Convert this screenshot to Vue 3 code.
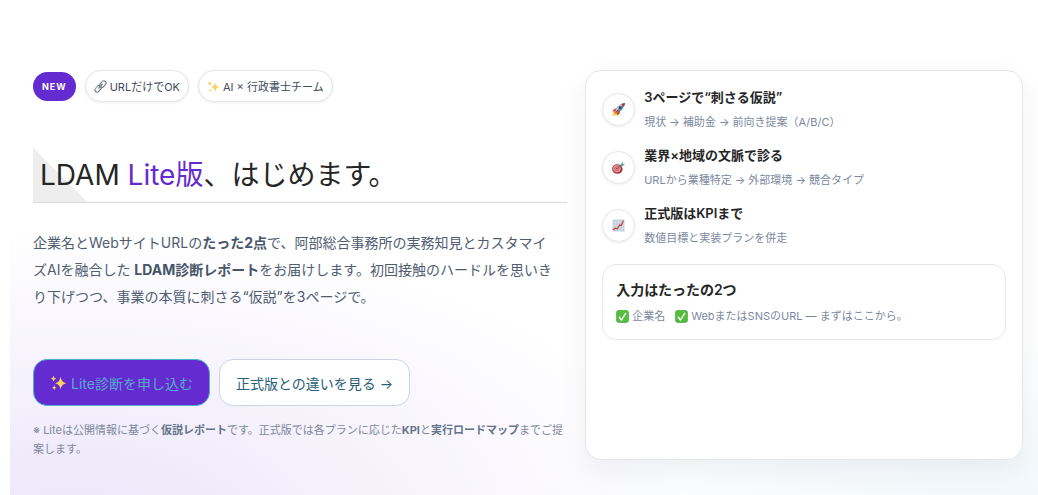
<script setup>
const points = [
  { icon: 'rocket', title: '3ページで“刺さる仮説”', text: '現状 → 補助金 → 前向き提案（A/B/C）' },
  { icon: 'target', title: '業界×地域の文脈で診る', text: 'URLから業種特定 → 外部環境 → 競合タイプ' },
  { icon: 'chart', title: '正式版はKPIまで', text: '数値目標と実装プランを併走' },
]
</script>

<template>
  <main class="hero">
    <section class="intro">
      <div class="badges">
        <span class="badge new">NEW</span>
        <span class="badge">
          <svg class="emoji-sm" viewBox="0 0 24 24" aria-hidden="true">
            <g fill="none" stroke-linecap="round">
              <rect x="10" y="3.500" width="13" height="8" rx="4" transform="rotate(-48 16.500 7.500)" stroke="#6a757c" stroke-width="2" />
              <rect x="1" y="12.500" width="13" height="8" rx="4" transform="rotate(-48 7.500 16.500)" stroke="#6a757c" stroke-width="2" />
              <path d="M9 15l6-7" stroke="#4a545a" stroke-width="2.400" />
              <path d="M9.500 14.200l4.800-5.600M14.500 4l3-1.500M3.500 15.500l3-3.500" stroke="#d5dbde" stroke-width="1" />
            </g>
          </svg>
          URLだけでOK
        </span>
        <span class="badge">
          <svg class="emoji-sm" viewBox="0 0 24 24" aria-hidden="true">
            <path fill="#fbcf62" d="M15 4Q16 12 23 13Q16 14 15 22Q14 14 7 13Q14 12 15 4ZM5 2Q5.500 6 9 6.500Q5.500 7 5 11Q4.500 7 1 6.500Q4.500 6 5 2ZM6 16Q6.500 19 9 19.500Q6.500 20 6 23Q5.500 20 3 19.500Q5.500 19 6 16Z" />
          </svg>
          AI × 行政書士チーム
        </span>
      </div>

      <h1>LDAM <span>Lite版</span>、はじめます。</h1>

      <p class="lead">
        企業名とWebサイトURLの<strong>たった2点</strong>で、阿部総合事務所の実務知見とカスタマイズAIを融合した <strong>LDAM診断レポート</strong>をお届けします。初回接触のハードルを思いきり下げつつ、事業の本質に刺さる“仮説”を3ページで。
      </p>

      <div class="actions">
        <a class="btn primary" href="#apply">
          <svg class="emoji" viewBox="0 0 24 24" aria-hidden="true">
            <path fill="#ffd45c" d="M15 4Q16 12 23 13Q16 14 15 22Q14 14 7 13Q14 12 15 4ZM5 2Q5.500 6 9 6.500Q5.500 7 5 11Q4.500 7 1 6.500Q4.500 6 5 2ZM6 16Q6.500 19 9 19.500Q6.500 20 6 23Q5.500 20 3 19.500Q5.500 19 6 16Z" />
          </svg>
          Lite診断を申し込む
        </a>
        <a class="btn" href="#compare">正式版との違いを見る →</a>
      </div>

      <p class="note">
        ※ Liteは公開情報に基づく<strong>仮説レポート</strong>です。正式版では各プランに応じた<strong>KPI</strong>と<strong>実行ロードマップ</strong>までご提案します。
      </p>
    </section>

    <aside class="card">
      <ul class="points">
        <li v-for="p in points" :key="p.icon">
          <span class="disc">
            <svg v-if="p.icon === 'rocket'" class="emoji-sm" viewBox="0 0 24 24" aria-hidden="true">
              <path fill="#f9c333" d="M7 14L1 18 3 19 0 24 6 22 7 24 11 18Z" />
              <path fill="#d83b32" d="M10 9L4 11 1 16 7 15ZM15 14L14 20 9 23 9 17Z" />
              <path fill="#63819b" d="M6 15Q9 5 18 2L22 6Q19 15 9 18Z" />
              <path fill="#b9cbd8" d="M6 15Q9 6 18 2L19 4Q13 8 8 16Z" />
              <path fill="#b92e36" d="M17 2Q20 0 24 0Q24 4 22 7Z" />
              <circle cx="15" cy="8.500" r="2.500" fill="#263f68" />
              <path d="M6 18l5-5" stroke="#c73432" stroke-width="2" />
            </svg>
            <svg v-else-if="p.icon === 'target'" class="emoji-sm" viewBox="0 0 24 24" aria-hidden="true">
              <ellipse cx="10" cy="15" rx="9.500" ry="8.500" fill="#a82f35" />
              <ellipse cx="9" cy="14" rx="8.500" ry="8" fill="#c4484c" />
              <ellipse cx="9" cy="14" rx="6" ry="5.500" fill="none" stroke="#f0cfcb" stroke-width="1.500" />
              <circle cx="9" cy="14" r="2.800" fill="none" stroke="#f0cfcb" stroke-width="1.200" />
              <path d="M9 14L19 6" stroke="#405b68" stroke-width="1.500" />
              <path fill="#5fa9b5" d="M16 6L20 1 20 5 24 6 20 9 16 9Z" />
            </svg>
            <svg v-else class="emoji-sm" viewBox="0 0 24 24" aria-hidden="true">
              <rect x="1" y="1" width="22" height="22" fill="#c3d0da" />
              <path d="M6 1v22M12 1v22M18 1v22M1 6h22M1 12h22M1 18h22" stroke="#d9e3ea" />
              <path d="M2 20L6 17 10 18 14 11 17 12 21 3" fill="none" stroke="#c43a3a" stroke-width="2.200" />
            </svg>
          </span>
          <div>
            <h2>{{ p.title }}</h2>
            <p>{{ p.text }}</p>
          </div>
        </li>
      </ul>

      <div class="inputs">
        <h2>入力はたったの2つ</h2>
        <p>
          <span v-for="label in ['企業名', 'WebまたはSNSのURL — まずはここから。']" :key="label" class="check">
            <svg class="tick" viewBox="0 0 24 24" aria-hidden="true">
              <rect x="0.500" y="0.500" width="23" height="23" rx="4" fill="#3da536" />
              <rect x="1.500" y="1" width="21" height="20.500" rx="3" fill="#55bd3c" />
              <path d="M5.500 12.500L10 18.500 18.500 5.500" fill="none" stroke="#fff" stroke-width="2.600" />
            </svg>
            {{ label }}
          </span>
        </p>
      </div>
    </aside>
  </main>
</template>

<style>
body {
  background: #fff;
}
</style>

<style scoped>
* {
  box-sizing: border-box;
}

.hero {
  display: grid;
  grid-template-columns: 1.22fr 1fr;
  gap: 18px;
  min-height: 100vh;
  margin-left: 10px;
  padding: 70px 15px 35px 23px;
  background:
    radial-gradient(620px 290px at 6% 105%, rgba(99, 44, 210, 0.12), transparent 100%),
    radial-gradient(520px 200px at 100% 108%, rgba(80, 160, 215, 0.09), transparent 100%),
    #fff;
  font-family: Inter, "Noto Sans CJK JP", sans-serif;
  color: #505d71;
}

h1,
h2,
p,
ul {
  margin: 0;
  padding: 0;
}

.badges {
  display: flex;
  align-items: center;
  gap: 9px;
}

.badge {
  display: inline-flex;
  align-items: center;
  gap: 3px;
  height: 32px;
  padding: 0 8px;
  border: 1px solid #e5e7eb;
  border-radius: 16px;
  background: #fff;
  box-shadow: 0 1px 3px rgba(15, 23, 42, 0.08);
  font-size: 11px;
  white-space: nowrap;
  color: #414b5a;
}

.badge.new {
  height: 29px;
  padding: 0 9px;
  border: 0;
  background: #642bd0;
  box-shadow: none;
  font-size: 9px;
  font-weight: 700;
  letter-spacing: 1px;
  color: #fff;
}

.emoji-sm {
  width: 13px;
  height: 13px;
}

.emoji {
  width: 17px;
  height: 17px;
}

h1 {
  margin-top: 46px;
  padding: 0 7px;
  border-bottom: 1px solid #d9d9db;
  background: linear-gradient(to top right, #eeeeef 50%, transparent 50%) 0 0 / 55px 54px no-repeat;
  font-size: 28px;
  font-weight: 400;
  line-height: 54px;
  color: #262626;
}

h1 span {
  color: #642bd0;
}

.lead {
  margin-top: 26px;
  padding-right: 8px;
  font-size: 14px;
  line-height: 27px;
}

.lead strong {
  color: #475569;
}

.actions {
  display: flex;
  gap: 9px;
  margin-top: 49px;
}

.btn {
  display: inline-flex;
  align-items: center;
  gap: 4px;
  height: 47px;
  padding: 0 16px;
  border: 1px solid #cbd5e1;
  border-radius: 14px;
  background: #fff;
  font-size: 14px;
  text-decoration: none;
  white-space: nowrap;
  color: #286078;
}

.btn.primary {
  border-color: #4ab5c9;
  background: #642bd0;
  color: #57a9cf;
}

.note {
  margin-top: 15px;
  font-size: 11px;
  line-height: 19px;
  color: #7c889b;
}

.note strong {
  color: #64748b;
}

.card {
  padding: 16px;
  border: 1px solid #e5e7eb;
  border-radius: 16px;
  background: #fff;
  box-shadow: 0 10px 30px rgba(15, 23, 42, 0.06);
}

.points {
  display: grid;
  gap: 13px;
  list-style: none;
}

.points li {
  display: flex;
  align-items: center;
  gap: 9px;
}

.disc {
  display: grid;
  flex: none;
  place-items: center;
  width: 33px;
  height: 33px;
  border: 1px solid #e5e7eb;
  border-radius: 50%;
  background: #fff;
  box-shadow: 0 1px 3px rgba(15, 23, 42, 0.08);
}

h2 {
  font-weight: 600;
  color: #262626;
}

.points h2 {
  font-size: 13px;
  line-height: 20px;
}

.points p {
  margin-top: 6px;
  font-size: 11px;
  line-height: 19px;
  color: #7c899f;
}

.inputs {
  margin-top: 16px;
  padding: 13px;
  border: 1px solid #e5e7eb;
  border-radius: 14px;
}

.inputs h2 {
  font-size: 14px;
  line-height: 24px;
}

.inputs p {
  display: flex;
  flex-wrap: wrap;
  gap: 10px;
  margin-top: 5px;
  font-size: 11px;
  line-height: 19px;
  color: #7c899f;
}

.check {
  display: inline-flex;
  align-items: center;
  gap: 3px;
}

.tick {
  width: 13px;
  height: 13px;
}
</style>
